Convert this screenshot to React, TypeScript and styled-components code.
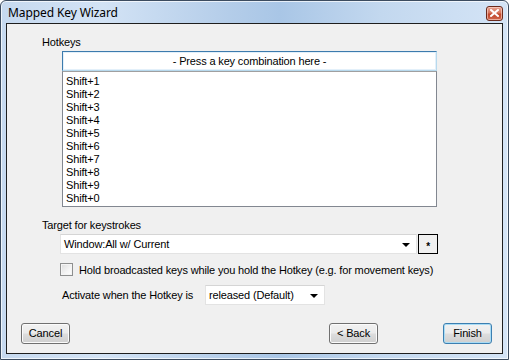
import styled, { createGlobalStyle } from 'styled-components';

const GlobalStyle = createGlobalStyle`
  html, body {
    margin: 0;
    padding: 0;
    width: 509px;
    height: 360px;
    overflow: hidden;
    background: #ffffff;
  }
  * {
    box-sizing: border-box;
  }
`;

const hotkeys = [
  'Shift+1',
  'Shift+2',
  'Shift+3',
  'Shift+4',
  'Shift+5',
  'Shift+6',
  'Shift+7',
  'Shift+8',
  'Shift+9',
  'Shift+0',
];

const Window = styled.div`
  width: 509px;
  height: 360px;
  display: flex;
  flex-direction: column;
  border: 1px solid #3c4c60;
  border-radius: 6px 6px 0 0;
  background: linear-gradient(
    to right,
    #c6d9ef 0%,
    #d3e3f5 20%,
    #b4cde9 45%,
    #a9c6e6 55%,
    #c3d8ef 75%,
    #d4e4f6 100%
  );
  box-shadow: inset 0 0 0 1px rgba(255, 255, 255, 0.7);
  font-family: 'Liberation Sans', Arial, sans-serif;
`;

const TitleBar = styled.div`
  height: 22px;
  display: flex;
  align-items: center;
  justify-content: space-between;
  padding: 0 5px 0 7px;
`;

const Title = styled.span`
  font-family: 'Noto Sans', 'Open Sans', sans-serif;
  font-size: 12px;
  color: #000000;
  letter-spacing: -0.1px;
`;

const CloseButton = styled.div`
  width: 17px;
  height: 15px;
  margin-top: 2px;
  border: 1px solid #6b2a1c;
  border-radius: 3px;
  background: linear-gradient(to bottom, #e8a493 0%, #d4735a 45%, #c0452a 55%, #d0674c 100%);
  box-shadow: inset 0 0 0 1px rgba(255, 220, 210, 0.6);
  display: flex;
  align-items: center;
  justify-content: center;
`;

const Client = styled.div`
  flex: 1;
  margin: 0 5px 5px 5px;
  border: 1px solid #1e1e1e;
  background: #f0f0f0;
  display: flex;
  flex-direction: column;
  font-size: 11px;
  letter-spacing: -0.15px;
  color: #000000;
`;

const Body = styled.div`
  padding: 12px 0 0 35px;
  display: flex;
  flex-direction: column;
`;

const Label = styled.div<{ $top?: number }>`
  line-height: 13px;
  height: 13px;
  margin-top: ${(p) => p.$top ?? 0}px;
  white-space: nowrap;
`;

const Indent = styled.div<{ $left: number; $top: number }>`
  margin-left: ${(p) => p.$left}px;
  margin-top: ${(p) => p.$top}px;
  display: flex;
  flex-direction: column;
`;

const KeyBox = styled.div`
  width: 375px;
  height: 20px;
  background: #ffffff;
  border: 1px solid #3d7bad;
  border-bottom-color: #b7d9ed;
  border-right-color: #b7d9ed;
  box-shadow: inset 0 0 0 1px #e3f0fa;
  display: flex;
  align-items: center;
  justify-content: center;
  line-height: 13px;
`;

const ListBox = styled.div`
  width: 375px;
  height: 136px;
  background: #ffffff;
  border: 1px solid #828790;
  border-top-color: #a0a0a0;
  padding: 3px 0 0 3px;
`;

const ListItem = styled.div`
  height: 13px;
  line-height: 13px;
`;

const ComboRow = styled.div`
  display: flex;
  align-items: center;
  gap: 1px;
  margin-left: 18px;
  margin-top: 2px;
`;

const Combo = styled.div<{ $width: number }>`
  width: ${(p) => p.$width}px;
  height: 20px;
  background: #ffffff;
  border: 1px solid #e3e3e3;
  border-top-color: #d5d5d5;
  display: flex;
  align-items: center;
  justify-content: space-between;
  padding: 0 6px 0 3px;
  line-height: 13px;
`;

const Arrow = styled.span`
  width: 0;
  height: 0;
  border-left: 4px solid transparent;
  border-right: 4px solid transparent;
  border-top: 4px solid #000000;
  margin-top: 1px;
`;

const StarButton = styled.div`
  width: 20px;
  height: 20px;
  border: 1px solid #000000;
  background: #f0f0f0;
  display: flex;
  align-items: center;
  justify-content: center;
  font-size: 10px;
  font-weight: bold;
  padding-top: 4px;
`;

const CheckRow = styled.label`
  display: flex;
  align-items: center;
  margin-left: 18px;
  margin-top: 9px;
  height: 13px;
  gap: 6px;
`;

const CheckBox = styled.span`
  width: 13px;
  height: 13px;
  border: 1px solid #8e8f8f;
  background: linear-gradient(135deg, #dcdcdc 0%, #f4f4f4 60%, #ffffff 100%);
  box-shadow: inset 0 0 0 1px #f4f4f4;
`;

const ActivateRow = styled.div`
  display: flex;
  align-items: center;
  margin-left: 20px;
  margin-top: 9px;
`;

const ActivateLabel = styled.span`
  width: 143px;
  white-space: nowrap;
`;

const ButtonBar = styled.div`
  margin-top: auto;
  display: flex;
  align-items: center;
  padding: 0 10px 9px 14px;
`;

const Spacer = styled.div`
  flex: 1;
`;

const Button = styled.div<{ $default?: boolean }>`
  width: 49px;
  height: 21px;
  border: 1px solid ${(p) => (p.$default ? '#3c7fb1' : '#707070')};
  border-radius: 3px;
  background: linear-gradient(to bottom, #f2f2f2 0%, #ebebeb 48%, #dddddd 52%, #cfcfcf 100%);
  box-shadow: inset 0 0 0 1px ${(p) => (p.$default ? '#a9dcf5' : '#fbfbfb')};
  display: flex;
  align-items: center;
  justify-content: center;
  line-height: 13px;
  margin-left: ${(p) => (p.$default ? '65px' : '0')};
`;

export default function App() {
  return (
    <>
      <GlobalStyle />
      <Window>
        <TitleBar>
          <Title>Mapped Key Wizard</Title>
          <CloseButton>
            <svg width="9" height="8" viewBox="0 0 9 8">
              <path
                d="M1 1 L8 7 M8 1 L1 7"
                stroke="#ffffff"
                strokeWidth="2"
                strokeLinecap="square"
              />
            </svg>
          </CloseButton>
        </TitleBar>
        <Client>
          <Body>
            <Label>Hotkeys</Label>
            <Indent $left={20} $top={2}>
              <KeyBox>- Press a key combination here -</KeyBox>
              <ListBox>
                {hotkeys.map((k) => (
                  <ListItem key={k}>{k}</ListItem>
                ))}
              </ListBox>
            </Indent>
            <Label $top={12}>Target for keystrokes</Label>
            <ComboRow>
              <Combo $width={357}>
                <span>Window:All w/ Current</span>
                <Arrow />
              </Combo>
              <StarButton>*</StarButton>
            </ComboRow>
            <CheckRow>
              <CheckBox />
              <span>Hold broadcasted keys while you hold the Hotkey (e.g. for movement keys)</span>
            </CheckRow>
            <ActivateRow>
              <ActivateLabel>Activate when the Hotkey is</ActivateLabel>
              <Combo $width={120}>
                <span>released (Default)</span>
                <Arrow />
              </Combo>
            </ActivateRow>
          </Body>
          <ButtonBar>
            <Button>Cancel</Button>
            <Spacer />
            <Button>&lt; Back</Button>
            <Button $default>Finish</Button>
          </ButtonBar>
        </Client>
      </Window>
    </>
  );
}
